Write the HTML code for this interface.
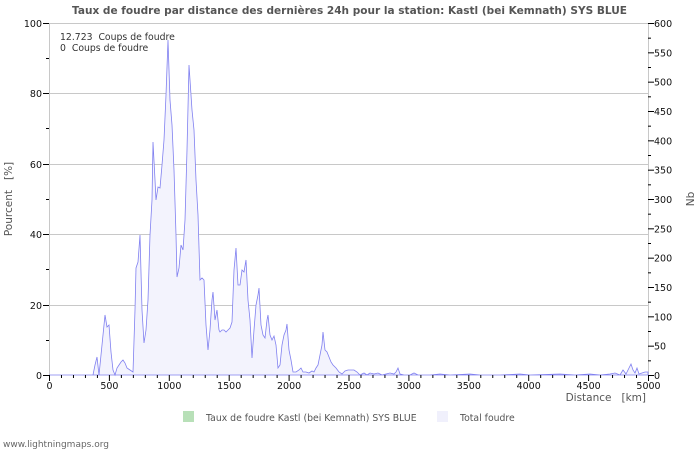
<!DOCTYPE html>
<html><head><meta charset="utf-8"><style>
html,body{margin:0;padding:0;background:#fff;width:700px;height:450px;overflow:hidden}
svg text{font-family:"DejaVu Sans","Liberation Sans",sans-serif;white-space:pre}
</style></head><body>
<svg width="700" height="450" xmlns="http://www.w3.org/2000/svg">
<text x="72" y="14" font-size="10.6" font-weight="bold" fill="#555" textLength="555" lengthAdjust="spacingAndGlyphs">Taux de foudre par distance des dernières 24h pour la station: Kastl (bei Kemnath) SYS BLUE</text>
<g stroke="#c8c8c8" stroke-width="1">
<line x1="49" y1="23.5" x2="648" y2="23.5"/>
<line x1="49" y1="93.5" x2="648" y2="93.5"/>
<line x1="49" y1="164.5" x2="648" y2="164.5"/>
<line x1="49" y1="234.5" x2="648" y2="234.5"/>
<line x1="49" y1="305.5" x2="648" y2="305.5"/>
<line x1="49.5" y1="23" x2="49.5" y2="375"/>
<line x1="648.5" y1="23" x2="648.5" y2="375"/>
</g>
<polygon fill="#f3f3fd" stroke="#8080f0" stroke-width="0.8" points="49,375 93,375 95,365 97,357 99,375 101,355 103,335 105,315 107,327 109,325 111,352 113,370 115,375 117,368 119,365 121,362 123,360 125,363 127,368 130,370 133,372 135,310 136,268 138,262 140,235 142,310 144,343 146,330 148,300 150,235 152,200 153,142 155,180 156,200 158,187 160,188 162,165 164,140 166,95 168,40 170,100 172,125 174,170 176,235 177,277 179,268 181,245 183,250 185,220 187,150 189,65 190,80 192,110 194,130 196,180 198,215 200,280 202,278 204,280 206,325 208,350 210,330 212,300 213,292 215,320 217,310 219,330 220,332 222,330 224,330 226,332 228,330 230,328 232,322 234,270 236,248 238,285 240,285 242,270 244,272 246,260 248,300 250,320 252,358 254,330 256,305 258,295 259,288 261,325 263,335 265,338 267,320 268,315 270,335 272,340 274,336 276,345 278,368 280,365 282,345 284,335 286,330 287,324 289,350 291,360 293,372 296,372 299,370 301,368 303,372 306,372 309,373 312,371 314,372 316,368 318,365 320,355 322,345 323,332 325,350 327,352 329,357 331,362 333,365 336,368 339,372 342,374 345,371 348,370 351,370 354,370 357,372 360,375 364,373 367,375 370,373 374,374 378,373 382,375 386,374 390,373 394,374 396,372 398,368 400,374 404,375 410,375 414,373 418,375 430,375 440,374 450,375 470,374 480,375 500,375 520,374 530,375 560,374 575,375 590,374 600,375 610,374 615,373 620,375 623,370 626,374 629,368 631,364 633,370 635,373 637,368 639,374 642,373 645,372 648,372 648,375"/>
<g font-size="9.3" fill="#333">
<text x="60" y="40">12.723  Coups de foudre</text>
<text x="60" y="51">0  Coups de foudre</text>
</g>
<g stroke="#000" stroke-width="1">
<line x1="43" y1="23.5" x2="49" y2="23.5"/><line x1="43" y1="93.5" x2="49" y2="93.5"/><line x1="43" y1="164.5" x2="49" y2="164.5"/><line x1="43" y1="234.5" x2="49" y2="234.5"/><line x1="43" y1="305.5" x2="49" y2="305.5"/><line x1="43" y1="375.5" x2="49" y2="375.5"/>
<line x1="46" y1="58.5" x2="49" y2="58.5"/><line x1="46" y1="128.5" x2="49" y2="128.5"/><line x1="46" y1="199.5" x2="49" y2="199.5"/><line x1="46" y1="269.5" x2="49" y2="269.5"/><line x1="46" y1="340.5" x2="49" y2="340.5"/>
</g>
<g id="rt" stroke="#000" stroke-width="1"></g>
<g id="xt" stroke="#000" stroke-width="1"></g>
<g font-size="9.5" fill="#111" text-anchor="end">
<text x="42" y="27">100</text><text x="42" y="97">80</text><text x="42" y="168">60</text><text x="42" y="238">40</text><text x="42" y="309">20</text><text x="42" y="379">0</text>
</g>
<g id="rl" font-size="9.5" fill="#111"></g>
<g id="xl" font-size="9.5" fill="#111" text-anchor="middle"></g>
<text transform="translate(12,199) rotate(-90)" font-size="10.5" fill="#555" text-anchor="middle">Pourcent   [%]</text>
<text transform="translate(694,199) rotate(-90)" font-size="10.5" fill="#555" text-anchor="middle">Nb</text>
<text x="646" y="401" font-size="10.5" fill="#555" text-anchor="end">Distance   [km]</text>
<rect x="183" y="411" width="11" height="11" fill="#b8e0b8"/>
<text x="206" y="421" font-size="9.3" fill="#555">Taux de foudre Kastl (bei Kemnath) SYS BLUE</text>
<rect x="437" y="411" width="11" height="11" fill="#f0f0fc"/>
<text x="460" y="421" font-size="9.3" fill="#555">Total foudre</text>
<text x="3" y="447" font-size="9" fill="#666">www.lightningmaps.org</text>
</svg>
<script>
var ns="http://www.w3.org/2000/svg";
function el(p,t,a,txt){var e=document.createElementNS(ns,t);for(var k in a)e.setAttribute(k,a[k]);if(txt!=null)e.textContent=txt;document.getElementById(p).appendChild(e);}
for(var i=0;i<=24;i++){var y=375-i*352/24+0.5;var big=i%2==0;el("rt","line",{x1:648,x2:big?654:651,y1:y,y2:y});if(big)el("rl","text",{x:654,y:y+3.5},String(i*25));}
for(var i=0;i<=50;i++){var x=49+i*599/50+0.5;var big=i%5==0;el("xt","line",{x1:x,x2:x,y1:375,y2:big?381:378});if(big)el("xl","text",{x:x,y:389},String(i*100));}
</script>
</body></html>
